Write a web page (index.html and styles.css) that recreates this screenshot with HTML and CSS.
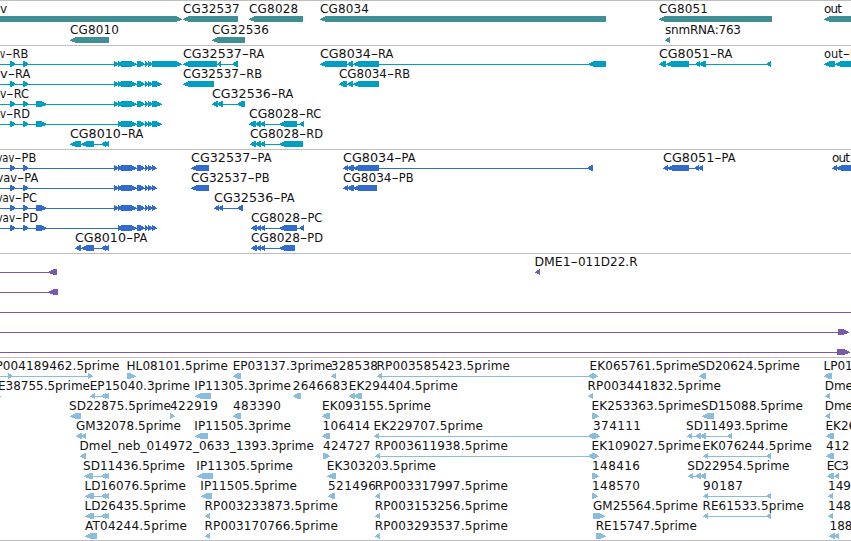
FILE: index.html
```html
<!DOCTYPE html>
<html lang="en">
<head>
<meta charset="utf-8">
<title>Genome tracks</title>
<link rel="stylesheet" href="styles.css">
</head>
<body>
<main class="browser">
  <section class="track genes" id="genes"></section>
  <section class="track transcripts" id="transcripts"></section>
  <section class="track proteins" id="proteins"></section>
  <section class="track bacs" id="bacs"></section>
  <section class="track ests" id="ests"></section>
</main>
<script src="tracks.js"></script>
</body>
</html>
```
FILE: styles.css
```css
body {
  margin: 0;
  background: #fff;
}

.browser {
  display: flex;
  flex-direction: column;
  width: 851px;
  height: 540px;
  overflow: hidden;
  border-bottom: 1px solid #bebebe;
}

.track {
  box-sizing: border-box;
  border-top: 1px solid #bebebe;
  height: 104px;
  overflow: hidden;
}

.genes { height: 45px; color: #408f95; }
.transcripts { color: #009fc1; }
.proteins { color: #316ccd; }
.bacs { color: #7859aa; }
.ests { height: 183px; color: #8abddd; }

.row {
  display: block;
  width: 851px;
  height: 20px;
  overflow: visible;
}

.genes .row { height: 21px; }
.genes .row:first-child { height: 22px; }

.shape {
  fill: currentColor;
  shape-rendering: crispEdges;
}

.label {
  font-family: "DejaVu Sans", sans-serif;
  font-size: 12px;
  fill: #111;
}
```
FILE: tracks.js
```js
// Each row: [features, labels].
// Features: "L a b" / "R a b" are left/right arrows, "- a b" is an intron line.
// Labels: [text, start, end]; the end is optional.
const T5 = 'R 114 119,R 118 123,R 121 137,R 137 145,R 145 149,R 148 153,';
const T4 = 'R 118 123,R 121 137,R 137 145,R 145 149,R 148 153,';
const HEAD = 'R -4 1,R 10 16,R 23 29,';
const tracks = {
  genes: [
    ['R -9 182,L 183 238,L 249 303,L 320 606,L 659 772,L 824 860',
      [['v', 0], ['CG32537', 183, 239.7], ['CG8028', 249, 298.2], ['CG8034', 320, 369], ['CG8051', 659, 708], ['out', 824, 842]]],
    ['L 70 109,L 212 245,L 665 670',
      [['CG8010', 70, 119], ['CG32536', 212, 269], ['snmRNA:763', 665, 741]]]
  ],
  transcripts: [
    ['- 0 114,' + HEAD + T5 + 'R 152 182,L 183 217,L 217 221,- 221 232,L 232 238,L 320 347,L 347 353,L 353 379,- 379 588,L 588 606,L 659 666,L 666 689,- 689 695,L 695 700,L 699 706,- 706 771,L 766 771,L 824 835,L 835 860',
      [['v-RB', 0, 28.3], ['CG32537-RA', 183, 264.3], ['CG8034-RA', 320, 393.3], ['CG8051-RA', 659, 732.3], ['out-R', 824, 858]]],
    ['- 0 114,' + HEAD + T5 + 'R 152 162,L 183 214,L 339 347,L 347 353,L 353 379',
      [['v-RA', 0, 30.3], ['CG32537-RB', 183, 262], ['CG8034-RB', 339, 410]]],
    ['- 0 114,' + HEAD + 'R 36 47,' + T5 + 'R 152 162,L 212 218,L 217 223,- 223 237,L 237 245',
      [['v-RC', 0, 29], ['CG32536-RA', 212, 293.3]]],
    ['- 0 118,' + HEAD + 'R 36 47,' + T4 + 'R 152 162,L 249 256,L 255 261,L 260 265,- 265 279,L 279 297,- 297 299,L 299 304',
      [['v-RD', 0, 30], ['CG8028-RC', 249, 321.3]]],
    ['L 70 81,L 81 94,- 94 101,L 101 106,L 104 109,L 250 256,L 255 261,L 260 265,- 265 279,L 279 303',
      [['CG8010-RA', 70, 143.3], ['CG8028-RD', 250, 323]]]
  ],
  proteins: [
    ['- 0 114,' + HEAD + T5 + 'R 152 157,L 191 209,L 343 348,L 347 354,L 353 379,- 379 587,L 587 593,L 663 668,L 667 689,- 689 694,L 694 699,L 698 703,L 832 837,L 836 860',
      [['vav-PB', -3.5, 36.3], ['CG32537-PA', 191, 271.5], ['CG8034-PA', 343, 415.5], ['CG8051-PA', 663, 735.5], ['out', 832, 850]]],
    ['- 0 114,' + HEAD + T5 + 'R 152 157,L 191 209,L 343 348,L 347 354,L 353 377',
      [['vav-PA', -3.5, 38.3], ['CG32537-PB', 191, 269.5], ['CG8034-PB', 343, 413.5]]],
    ['- 0 114,' + HEAD + 'R 36 47,' + T5 + 'R 152 157,L 214 219,L 218 223,- 223 237,L 237 243',
      [['vav-PC', -3.5, 37], ['CG32536-PA', 214, 294.5]]],
    ['- 0 118,' + HEAD + 'R 36 47,' + T4 + 'R 152 157,L 251 257,L 256 261,L 260 265,- 265 279,L 279 297,- 297 299,L 299 304',
      [['vav-PD', -3.5, 38], ['CG8028-PC', 251, 322.3]]],
    ['L 75 81,L 81 94,- 94 101,L 101 106,L 104 109,L 251 257,L 256 261,L 260 265,- 265 279,L 279 295',
      [['CG8010-PA', 75, 147.2], ['CG8028-PD', 251, 323]]]
  ],
  bacs: [
    ['- 0 48,L 48 57,L 535 540', [['DME1-011D22.R', 534.5, 637.5]]],
    ['- 0 48,L 48 58', []],
    ['- 0 851', []],
    ['- 0 838,R 838 849', []],
    ['- 0 837,R 837 850', []]
  ],
  ests: [
    ['- 0 88,R 8 13,R 88 93,R 127 136,L 233 241,L 331 336,L 377 382,- 382 588,L 588 593,R 592 598,L 699 706,L 824 832',
      [['P004189462.5prime', -4.5, 119.5], ['HL08101.5prime', 126.5, 228], ['EP03137.3prime', 232.7, 332.5], ['328538', 330.7, 378], ['RP003585423.5prime', 376.5, 510], ['EK065761.5prime', 589.5, 698.7], ['SD20624.5prime', 698, 800], ['LP01', 823.5]]],
    ['R -4 1,L 90 95,- 95 101,L 101 106,L 104 109,L 195 211,L 293 301,L 349 355,L 354 362,L 588 593,L 825 830',
      [['E38755.5prime', -2, 90], ['EP15040.3prime', 89.7, 189.8], ['IP11305.3prime', 194.3, 291], ['2646683', 292.7, 348], ['EK294404.5prime', 348.7, 458], ['RP003441832.5prime', 587.5, 721], ['Dme', 824.7]]],
    ['L 70 81,R 170 175,L 233 241,L 322 330,R 592 599,L 702 714,L 825 830',
      [['SD22875.5prime', 69, 171], ['422919', 170, 218], ['483390', 233, 281], ['EK093155.5prime', 322, 431], ['EK253363.5prime', 591.5, 701], ['SD15088.5prime', 701, 803], ['Dme', 824.7]]],
    ['L 76 82,L 81 86,L 195 208,L 322 330,L 374 379,- 379 588,L 588 594,R 593 600,L 687 692,- 692 695,L 695 701,L 700 706,- 706 727,L 727 732,L 826 834',
      [['GM32078.5prime', 76, 181], ['IP11505.3prime', 194.3, 291], ['106414', 322.5, 370], ['EK229707.5prime', 373.5, 483], ['374111', 593, 641], ['SD11493.5prime', 686, 788], ['EK26', 825.5]]],
    ['L 80 86,R 323 330,L 375 380,- 380 588,L 588 594,R 593 599,L 703 708,- 708 771,L 766 771,L 826 834',
      [['Dmel_neb_014972_0633_1393.3prime', 79.5, 314], ['424727', 323, 370.5], ['RP003611938.5prime', 374.7, 508], ['EK109027.5prime', 591.5, 701], ['EK076244.5prime', 702.5, 812], ['412', 826, 849.5]]],
    ['L 84 93,- 93 101,L 101 106,L 104 109,L 197 213,L 327 336,R 592 599,L 688 693,- 693 695,L 695 701,L 700 706,L 827 834,L 834 839',
      [['SD11436.5prime', 83, 185], ['IP11305.5prime', 196.3, 293], ['EK303203.5prime', 326.8, 436], ['148416', 592, 640], ['SD22954.5prime', 687.3, 789.3], ['EC3', 826.8, 849]]],
    ['L 85 94,- 94 101,L 101 106,L 104 109,L 201 212,L 328 335,L 375 380,R 592 598,L 703 708,- 708 771,L 766 771,L 828 833',
      [['LD16076.5prime', 84.5, 186], ['IP11505.5prime', 200.3, 297], ['521496', 328, 376], ['RP003317997.5prime', 374.7, 508], ['148570', 592, 640], ['90187', 703, 743], ['149', 828]]],
    ['L 85 94,- 94 101,L 101 106,L 104 109,L 205 210,L 375 380,R 593 605,L 703 708,- 708 771,L 766 771,L 828 833',
      [['LD26435.5prime', 84.5, 186], ['RP003233873.5prime', 204.5, 338], ['RP003153256.5prime', 374.7, 508], ['GM25564.5prime', 593, 698], ['RE61533.5prime', 702.5, 804], ['148', 828]]],
    ['L 85 97,L 205 210,L 375 380,R 596 606,L 829 835,L 834 839',
      [['AT04244.5prime', 85, 187], ['RP003170766.5prime', 204.5, 338], ['RP003293537.5prime', 374.7, 508], ['RE15747.5prime', 595.7, 697], ['188', 829.5]]]
  ]
};

const NS = 'http://www.w3.org/2000/svg';
function add(parent, tag, attrs, text) {
  const el = document.createElementNS(NS, tag);
  for (const k in attrs) el.setAttribute(k, attrs[k]);
  if (text) el.textContent = text;
  parent.appendChild(el);
  return el;
}

function drawFeature(svg, spec, y) {
  const [kind, a, b] = spec.split(' ').map((v, i) => (i ? Number(v) : v));
  if (kind === '-') {
    add(svg, 'rect', { class: 'shape', x: a, y: y + 3, width: b - a, height: 1 });
    return;
  }
  // Stepped arrow heads, one pixel row at a time
  const w = b - a;
  const inset = w > 8 ? [5, 3, 1, 0, 2, 5] : [4, 2, 1, 0, 2, 4];
  inset.forEach((d, i) => {
    const cut = Math.min(d, w - 1);
    add(svg, 'rect', { class: 'shape', x: kind === 'L' ? a + cut : a, y: y + i, width: w - cut, height: 1 });
  });
}

function fit(el, width) {
  el.setAttribute('textLength', width);
  el.setAttribute('lengthAdjust', 'spacingAndGlyphs');
}

function drawLabel(svg, [text, start, end], y) {
  const label = add(svg, 'text', { class: 'label', x: start, y });
  const cut = text.indexOf('-');
  if (cut < 0) {
    label.textContent = text;
    if (end) label.setAttribute('textLength', end - start);
    return;
  }
  // The hyphen is drawn wide, between the name and its suffix
  const head = add(label, 'tspan', {}, text.slice(0, cut));
  const dash = add(label, 'tspan', {}, '-');
  const tail = add(label, 'tspan', {}, text.slice(cut + 1));
  const tailWidth = tail.getComputedTextLength() * (text.length < 12 ? 0.95 : 1);
  const tailStart = end - tailWidth;
  fit(head, tailStart - 7.3 - start);
  dash.setAttribute('x', tailStart - 7.3);
  fit(dash, 7.3);
  tail.setAttribute('x', tailStart);
  fit(tail, tailWidth);
}

for (const id in tracks) {
  tracks[id].forEach(([features, labels], i) => {
    const svg = add(document.getElementById(id), 'svg', { class: 'row' });
    // The second gene row sits one pixel tighter
    const top = id === 'genes' && i === 1 ? 14 : 15;
    features.split(',').forEach(f => drawFeature(svg, f, top));
    labels.forEach(l => drawLabel(svg, l, id === 'genes' && i === 1 ? 11 : 12));
  });
}
```
